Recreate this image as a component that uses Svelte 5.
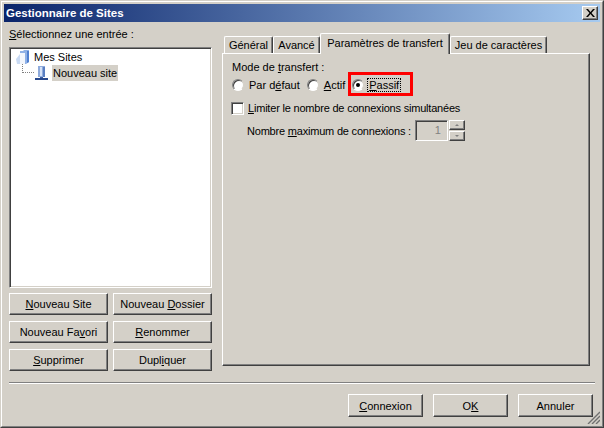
<script lang="ts">
    // Site manager dialog, classic Windows look.
    const siteButtons = [
        { pre: '', key: 'N', post: 'ouveau Site' },
        { pre: 'Nouveau ', key: 'D', post: 'ossier' },
        { pre: 'Nouveau Fa', key: 'v', post: 'ori' },
        { pre: '', key: 'R', post: 'enommer' },
        { pre: '', key: 'S', post: 'upprimer' },
        { pre: 'Dupl', key: 'i', post: 'quer' },
    ];

    const tabs = [
        { label: 'Général', width: 49 },
        { label: 'Avancé', width: 47 },
        { label: 'Paramètres de transfert', width: 130, active: true },
        { label: 'Jeu de caractères', width: 97 },
    ];
</script>

<div class="window">
    <div class="frame">
        <header class="title">
            <span>Gestionnaire de Sites</span>
            <button type="button" class="close" aria-label="Fermer">
                <svg width="9" height="8" viewBox="0 0 9 8">
                    <path d="M0 0h2l2.500 3L7 0h2L5.500 4 9 8H7L4.500 5 2 8H0l3.500-4z" fill="#000" />
                </svg>
            </button>
        </header>

        <div class="body">
            <div class="main">
                <section class="left">
                    <div class="left__label"><u>S</u>électionnez une entrée :</div>
                    <div class="tree">
                        <div class="node">
                            <svg class="icon" width="16" height="16" viewBox="0 0 16 16">
                                <path d="M1 10 5 5v10H2z" fill="#c9daf3" />
                                <path d="M5 2h3l1-1h5v12l-3 2H5z" fill="#8fb1e6" />
                                <path d="M5 4h5v11H5z" fill="#f2f6fd" />
                                <path d="M12 2h2v11l-2 1z" fill="#4f7fd0" />
                            </svg>
                            <span class="node__text">Mes Sites</span>
                        </div>
                        <div class="node node--child">
                            <span class="dots"></span>
                            <svg class="icon" width="13" height="16" viewBox="0 0 13 16">
                                <path d="M3 1h7v11H3z" fill="#8fabdc" />
                                <path d="M5 2h2v9H5z" fill="#d6e2f6" />
                                <path d="M8 2h2v10H8z" fill="#5a7fc2" />
                                <path d="M5 12h3v1H5z" fill="#3d5fa0" />
                                <path d="M0 13h13v2H0z" fill="#28488c" />
                            </svg>
                            <span class="node__text node__text--sel">Nouveau site</span>
                        </div>
                    </div>
                    <div class="actions">
                        {#each siteButtons as b (b.pre + b.key)}
                            <button type="button" class="btn">{b.pre}<u>{b.key}</u>{b.post}</button>
                        {/each}
                    </div>
                </section>

                <section class="right">
                    <div class="tabs">
                        {#each tabs as t (t.label)}
                            <div class="tab" class:tab--active={t.active} style="width: {t.width}px">{t.label}</div>
                        {/each}
                    </div>
                    <div class="panel">
                        <div class="panel__label">Mode de <u>t</u>ransfert :</div>
                        <div class="radios">
                            <span class="radio-item">
                                <span class="radio"></span>
                                <span>Par d<u>é</u>faut</span>
                            </span>
                            <span class="radio-item">
                                <span class="radio"></span>
                                <span><u>A</u>ctif</span>
                            </span>
                            <span class="radio-item radio-item--passive">
                                <span class="radio radio--on"></span>
                                <span class="focus"><u>P</u>assif</span>
                            </span>
                        </div>
                        <div class="check-row">
                            <span class="check"></span>
                            <span class="tight"><u>L</u>imiter le nombre de connexions simultanées</span>
                        </div>
                        <div class="max-row">
                            <span class="tight">Nombre <u>m</u>aximum de connexions :</span>
                            <span class="spin-input">1</span>
                            <span class="spin">
                                <span class="spin__btn"><i class="up"></i></span>
                                <span class="spin__btn"><i class="down"></i></span>
                            </span>
                        </div>
                        <div class="highlight"></div>
                    </div>
                </section>
            </div>

            <div class="sep"></div>

            <footer class="footer">
                <button type="button" class="btn btn--foot"><u>C</u>onnexion</button>
                <button type="button" class="btn btn--foot">O<u>K</u></button>
                <button type="button" class="btn btn--foot">Annuler</button>
            </footer>
            <svg class="grip" width="13" height="13" viewBox="0 0 13 13">
                <path d="M13 1 1 13M13 5 5 13M13 9 9 13" stroke="#707070" stroke-width="1.400" fill="none" />
            </svg>
        </div>
    </div>
</div>

<style>
    :global(body) {
        margin: 0;
        background: #d4d0c8;
    }
    .window {
        box-sizing: border-box;
        width: 604px;
        height: 428px;
        border: 1px solid;
        border-color: #d4d0c8 #404040 #404040 #d4d0c8;
        font-family: "Liberation Sans", Arial, sans-serif;
        font-size: 11px;
        color: #000;
        background: #d4d0c8;
    }
    .frame {
        box-sizing: border-box;
        height: 100%;
        border: 1px solid;
        border-color: #fff #808080 #808080 #fff;
        padding: 2px;
        display: flex;
        flex-direction: column;
    }
    .title {
        flex: none;
        height: 18px;
        display: flex;
        align-items: center;
        justify-content: space-between;
        padding: 0 2px;
        background: linear-gradient(90deg, #0a246a, #a6caf0);
        color: #fff;
        font-weight: 700;
        font-size: 11.5px;
    }
    .close {
        box-sizing: border-box;
        width: 16px;
        height: 14px;
        padding: 0;
        display: flex;
        align-items: center;
        justify-content: center;
        background: #d4d0c8;
        border: 1px solid;
        border-color: #fff #404040 #404040 #fff;
        box-shadow: inset -1px -1px #808080;
    }
    .body {
        flex: 1;
        position: relative;
        padding: 0 5px;
        display: flex;
        flex-direction: column;
    }
    .main {
        display: grid;
        grid-template-columns: 203px 368px;
        column-gap: 10px;
        height: 350px;
    }
    .left {
        display: flex;
        flex-direction: column;
    }
    .left__label {
        height: 25px;
        line-height: 25px;
    }
    .tree {
        box-sizing: border-box;
        height: 241px;
        background: #fff;
        border: 1px solid;
        border-color: #808080 #fff #fff #808080;
        box-shadow: inset 1px 1px #404040, inset -1px -1px #d4d0c8;
        padding: 1px 0 0 5px;
    }
    .node {
        position: relative;
        display: flex;
        align-items: center;
        height: 16px;
        gap: 1px;
    }
    .node--child {
        padding-left: 20px;
        gap: 4px;
    }
    .icon {
        flex: none;
    }
    .node__text {
        padding: 0 2px;
        line-height: 16px;
    }
    .node__text--sel {
        padding: 0 1px;
        background: #d4d0c8;
    }
    .dots {
        position: absolute;
        left: 7px;
        top: -1px;
        width: 11px;
        height: 8px;
        border-left: 1px dotted #808080;
        border-bottom: 1px dotted #808080;
    }
    .actions {
        margin-top: 5px;
        display: grid;
        grid-template-columns: 99px 99px;
        grid-auto-rows: 22px;
        column-gap: 5px;
        row-gap: 6px;
    }
    .btn {
        box-sizing: border-box;
        padding: 0;
        font: inherit;
        color: #000;
        background: #d4d0c8;
        border: 1px solid;
        border-color: #fff #404040 #404040 #fff;
        box-shadow: inset -1px -1px #808080;
    }
    .right {
        padding-top: 11px;
        display: flex;
        flex-direction: column;
    }
    .tabs {
        display: flex;
        align-items: flex-end;
        height: 20px;
        padding-left: 2px;
        position: relative;
        z-index: 1;
    }
    .tab {
        box-sizing: border-box;
        height: 17px;
        line-height: 17px;
        text-align: center;
        border: 1px solid;
        border-bottom: 0;
        border-color: #fff #404040 #fff #fff;
        border-radius: 2px 2px 0 0;
        box-shadow: inset -1px 0 #808080;
    }
    .tab--active {
        height: 21px;
        line-height: 18px;
        margin-bottom: -1px;
        background: #d4d0c8;
    }
    .panel {
        box-sizing: border-box;
        position: relative;
        height: 313px;
        border: 1px solid;
        border-color: #fff #404040 #404040 #fff;
        box-shadow: inset -1px -1px #808080;
        padding: 7px 0 0 9px;
    }
    .panel__label {
        line-height: 13px;
    }
    .radios {
        display: flex;
        align-items: center;
        margin-top: 3px;
        height: 16px;
        gap: 7px;
    }
    .radio-item {
        display: flex;
        align-items: center;
        gap: 5px;
    }
    .radio-item--passive {
        gap: 4px;
    }
    .radio {
        box-sizing: border-box;
        flex: none;
        width: 12px;
        height: 12px;
        border-radius: 50%;
        background: #fff;
        border: 1px solid;
        border-color: #808080 #d4d0c8 #fff #808080;
        box-shadow: inset 1px 1px #404040;
        display: inline-flex;
        align-items: center;
        justify-content: center;
    }
    .radio--on::after {
        content: '';
        width: 4px;
        height: 4px;
        border-radius: 50%;
        background: #000;
    }
    .focus {
        outline: 1px dotted #000;
        padding: 0 1px;
    }
    .check-row {
        display: flex;
        align-items: center;
        gap: 4px;
        margin-top: 8px;
        height: 14px;
    }
    .check {
        box-sizing: border-box;
        flex: none;
        width: 13px;
        height: 13px;
        margin-left: -1px;
        background: #fff;
        border: 1px solid;
        border-color: #808080 #fff #fff #808080;
        box-shadow: inset 1px 1px #404040, inset -1px -1px #d4d0c8;
    }
    .tight {
        letter-spacing: -0.2px;
    }
    .max-row {
        display: flex;
        align-items: center;
        margin-top: 5px;
        padding-left: 15px;
        height: 21px;
    }
    .spin-input {
        box-sizing: border-box;
        width: 33px;
        height: 21px;
        margin-left: 4px;
        padding-right: 6px;
        text-align: right;
        line-height: 18px;
        color: #808080;
        border: 1px solid;
        border-color: #808080 #fff #fff #808080;
        box-shadow: inset 1px 1px #404040, inset -1px -1px #d4d0c8;
    }
    .spin {
        display: flex;
        flex-direction: column;
        gap: 1px;
        margin-left: 1px;
    }
    .spin__btn {
        box-sizing: border-box;
        width: 16px;
        height: 10px;
        display: flex;
        align-items: center;
        justify-content: center;
        border: 1px solid;
        border-color: #fff #404040 #404040 #fff;
        box-shadow: inset -1px -1px #808080;
    }
    .spin__btn i {
        width: 0;
        height: 0;
        border-left: 2px solid transparent;
        border-right: 2px solid transparent;
    }
    .spin__btn .up {
        border-bottom: 2px solid #808080;
    }
    .spin__btn .down {
        border-top: 2px solid #808080;
    }
    .highlight {
        position: absolute;
        left: 125px;
        top: 18px;
        box-sizing: border-box;
        width: 65px;
        height: 24px;
        border: 3px solid #fe0000;
    }
    .sep {
        margin-top: 10px;
        height: 1px;
        width: 586px;
        background: #808080;
        border-bottom: 1px solid #fff;
    }
    .footer {
        margin-top: 10px;
        display: flex;
        gap: 10px;
        padding-left: 339px;
    }
    .btn--foot {
        flex: none;
        width: 75px;
        height: 23px;
    }
    .grip {
        position: absolute;
        right: 0;
        bottom: 0;
    }
</style>
